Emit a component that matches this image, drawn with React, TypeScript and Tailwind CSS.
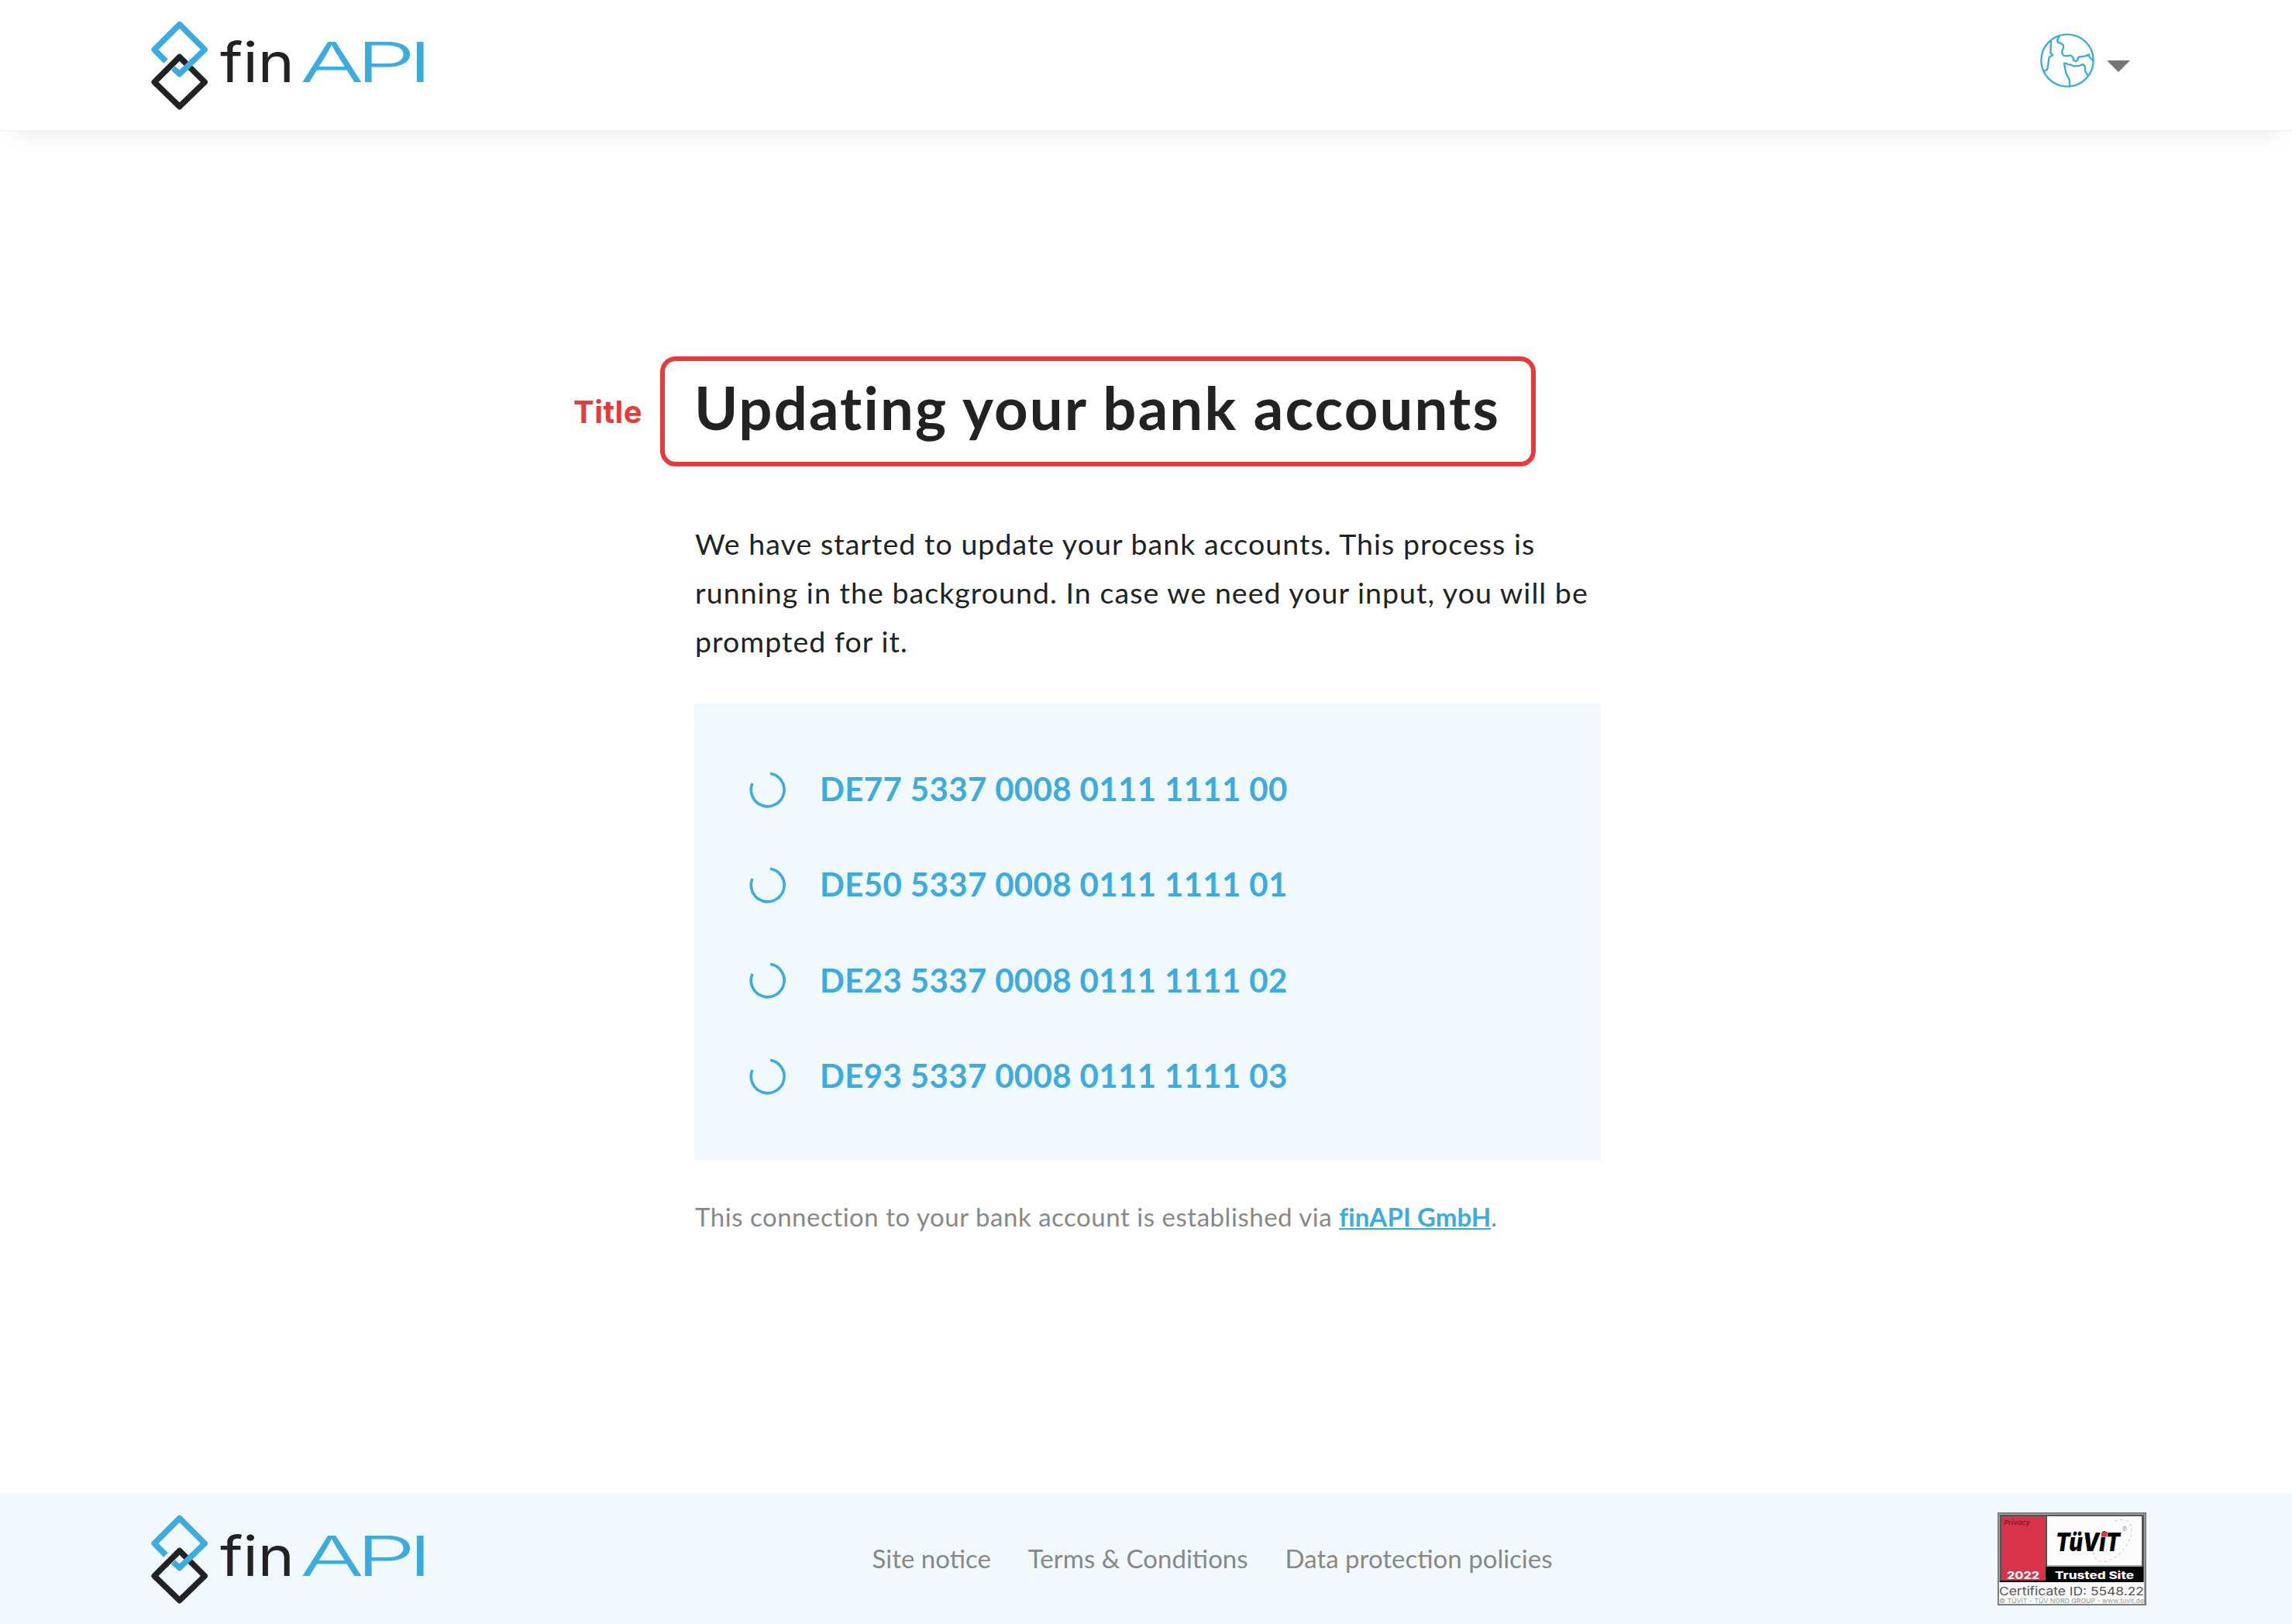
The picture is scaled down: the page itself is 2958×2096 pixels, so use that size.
const accounts = [
  "DE77 5337 0008 0111 1111 00",
  "DE50 5337 0008 0111 1111 01",
  "DE23 5337 0008 0111 1111 02",
  "DE93 5337 0008 0111 1111 03",
];

const links = ["Site notice", "Terms & Conditions", "Data protection policies"];

function Logo() {
  return (
    <svg viewBox="0 0 356 116" className="h-[116px] w-[356px] shrink-0 overflow-visible font-['Inter',sans-serif]">
      <g fill="none" strokeWidth="7.5" strokeLinejoin="round">
        <path d="M36.7 47.5 69.2 80 36.7 111.5 4.2 80Z" stroke="#222" />
        <path d="M19 53 4.2 38 36.7 5.5 69.2 38 36.7 69.5 28.5 62" stroke="#3cabdd" />
      </g>
      <text x="89" y="80" fontSize="71" fontWeight="400" fill="#222" textLength="96" lengthAdjust="spacingAndGlyphs">
        fin
      </text>
      <text
        x="192"
        y="80"
        fontSize="71"
        fontWeight="300"
        letterSpacing="-6"
        fill="#3cabdd"
        textLength="161"
        lengthAdjust="spacingAndGlyphs"
      >
        API
      </text>
    </svg>
  );
}

function Globe() {
  return (
    <svg
      viewBox="96 65 216 216"
      className="size-[72px]"
      fill="none"
      stroke="#3cabdd"
      strokeWidth="7"
      strokeLinecap="round"
      strokeLinejoin="round"
    >
      <circle cx="204" cy="173" r="101" />
      <path d="M141 96 139 145 148 152 134 160C130 178 131 198 125 210L114 214" />
      <path d="M173 81C162 92 164 103 176 106C188 110 193 117 188 127C182 136 182 148 190 154C198 157 206 156 216 153L226 160 228 172 236 177 244 171 247 160 275 156 288 150" />
      <path d="M283 152 303 173" />
      <path d="M213 273C214 258 213 246 207 237C197 228 196 205 192 184C201 182 205 191 216 189L230 195 250 194 264 188 272 195 274 216 285 232" />
    </svg>
  );
}

function Spinner() {
  return (
    <svg viewBox="0 0 48 48" className="size-12" fill="none" stroke="#3cabdd" strokeWidth="3.6">
      <path d="M27 3.2A21.4 21.4 0 1 1 4 16" />
    </svg>
  );
}

function Badge() {
  return (
    <svg viewBox="0 0 192 120" className="h-[120px] w-48 shrink-0 font-['Inter',sans-serif]">
      <rect width="192" height="120" fill="#707070" />
      <rect x="1.5" y="1.5" width="189" height="117" fill="#a3a3a3" />
      <rect x="3" y="3" width="186" height="88" fill="#555" />
      <rect x="2" y="90" width="187" height="28" fill="#fafafa" />
      <rect x="5" y="5" width="57" height="82" fill="#d83348" />
      <rect x="64" y="5" width="122" height="63" fill="#fcfcfc" />
      <rect x="64" y="68" width="122" height="2" fill="#aaa" />
      <rect x="62" y="70" width="126" height="20" fill="#050505" />
      <rect x="3" y="88" width="60" height="2" fill="#050505" />
      <text x="8" y="16" fontSize="8" fontWeight="500" fontStyle="italic" fill="#5c2029" textLength="34" lengthAdjust="spacingAndGlyphs">
        Privacy
      </text>
      <text x="12" y="86" fontSize="13" fontWeight="800" fill="#fff" textLength="42" lengthAdjust="spacingAndGlyphs">
        2022
      </text>
      <path
        d="M151 11C173 4 178 22 168 40C158 57 142 66 132 63C125 60 123 54 124 50"
        fill="none"
        stroke="#f0c8d0"
        strokeWidth="1.2"
        strokeDasharray="4 3"
      />
      <text x="75" y="50" fontSize="33" fontWeight="900" fontStyle="italic" fill="#050505" textLength="83" lengthAdjust="spacingAndGlyphs">
        TüViT
      </text>
      <path d="M135 25h7l-1.5 6.5h-7z" fill="#d83348" />
      <text x="161" y="25" fontSize="9" fill="#999">
        ®
      </text>
      <text x="74" y="86" fontSize="13" fontWeight="800" fill="#fff" textLength="102" lengthAdjust="spacingAndGlyphs">
        Trusted Site
      </text>
      <text x="2" y="107" fontSize="15" fill="#555" textLength="187" lengthAdjust="spacingAndGlyphs">
        Certificate ID: 5548.22
      </text>
      <text x="2" y="117" fontSize="8" fill="#999" textLength="187" lengthAdjust="spacingAndGlyphs">
        © TÜViT - TÜV NORD GROUP - www.tuvit.de
      </text>
    </svg>
  );
}

export default function App() {
  return (
    <div className="flex h-[2096px] flex-col bg-white font-['Lato',sans-serif] text-[#222]">
      <header className="flex h-[170px] shrink-0 items-center justify-between border-b-2 border-[#f2f2f8] pr-[209px] pl-[195px] shadow-[0_20px_30px_-20px_rgba(0,0,0,0.11)]">
        <Logo />
        <button className="flex items-center gap-[15px] pb-3">
          <Globe />
          <svg viewBox="0 0 30 15" className="mt-3.5 h-[15px] w-[30px]" fill="#757575">
            <path d="M0 0h30L15 15z" />
          </svg>
        </button>
      </header>

      <main className="mx-auto w-[1170px] flex-1 translate-x-0.5 pt-[290px]">
        <div className="relative -ml-11 flex h-[142px] w-[1130px] items-center rounded-[20px] border-6 border-[#e63b3b] pb-2.5 pl-[38px]">
          <span className="absolute top-[66px] right-full mr-[29px] -translate-y-1/2 font-['Inter',sans-serif] text-[40px] font-bold tracking-[0.4px] text-[#e63b3b]">
            Title
          </span>
          <h1 className="text-[76px] leading-none font-bold tracking-[2.15px] whitespace-nowrap">Updating your bank accounts</h1>
        </div>

        <p className="mt-[68px] pl-px text-[37.5px] leading-[63px] tracking-[1.05px] whitespace-nowrap">
          We have started to update your bank accounts. This process is
          <br />
          running in the background. In case we need your input, you will be
          <br />
          prompted for it.
        </p>

        <ul className="mt-[49px] h-[590px] bg-[#f2f9fd] py-[49px] pl-[71px]">
          {accounts.map((iban) => (
            <li key={iban} className="flex h-[123.3px] items-center gap-[43px]">
              <Spinner />
              <span className="text-[42px] font-bold tracking-[0.35px] text-[#3cabdd]">{iban}</span>
            </li>
          ))}
        </ul>

        <p className="mt-12 pl-px text-[33px] leading-[48px] tracking-[0.53px] text-[#888]">
          This connection to your bank account is established via{" "}
          <a className="font-bold tracking-[0.1px] text-[#3cabdd] underline decoration-2 underline-offset-2">finAPI GmbH</a>.
        </p>
      </main>

      <footer className="flex h-[170px] shrink-0 items-center justify-between bg-[#f2f9fd] pt-0.5 pr-[188px] pl-[195px]">
        <Logo />
        <nav className="flex gap-12 text-[33px] text-[#888]">
          {links.map((l) => (
            <a key={l}>{l}</a>
          ))}
        </nav>
        <Badge />
      </footer>
    </div>
  );
}
